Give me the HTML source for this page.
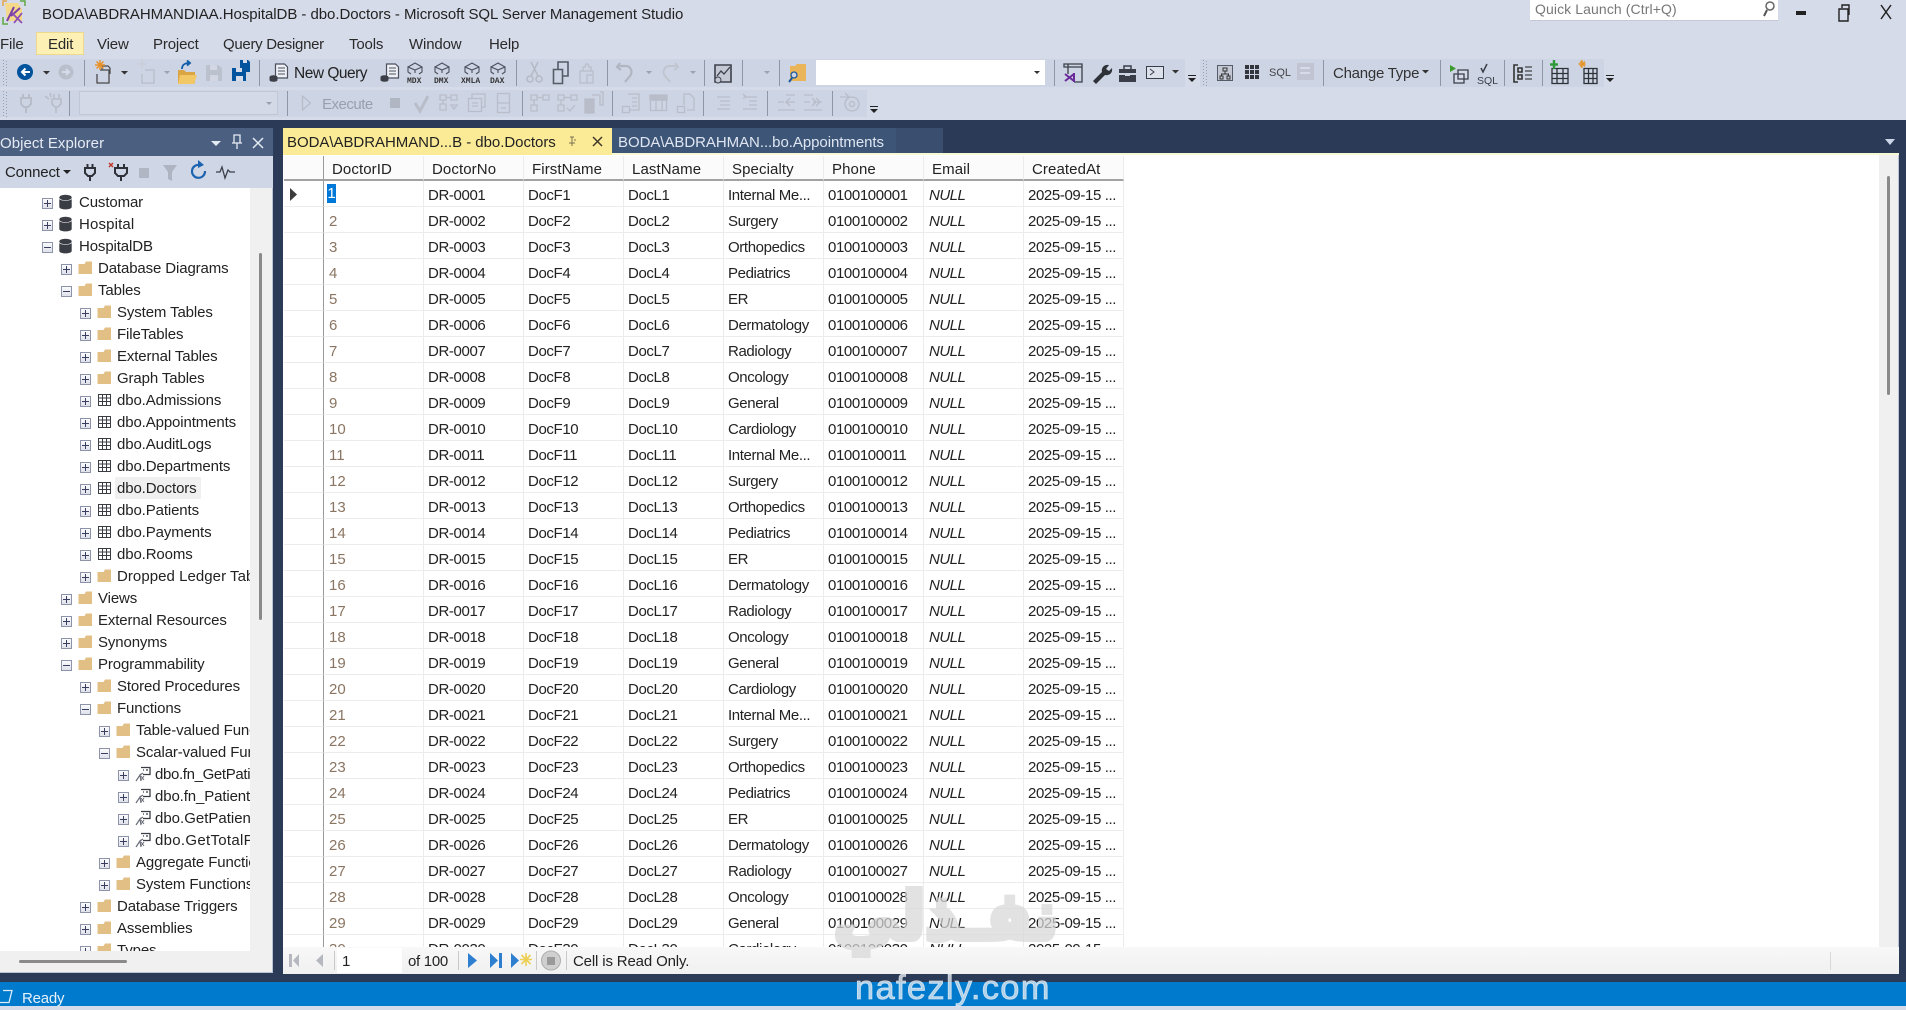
<!DOCTYPE html>
<html><head><meta charset="utf-8"><title>SSMS</title>
<style>
*{box-sizing:border-box}
html,body{margin:0;padding:0;width:1906px;height:1006px;overflow:hidden;background:#d6dbe9;font-family:"Liberation Sans",sans-serif;color:#1e1e1e}
.a{position:absolute;white-space:nowrap}
.band{position:absolute;background:#cdd4e4}
.menu{font-size:15px;line-height:22px;top:34px;letter-spacing:-.15px;color:#2a2a2a}
#tree{position:absolute;left:0;top:188px;width:250px;height:763px;background:#fff;overflow:hidden}
.r{position:absolute;left:0;width:250px;height:22px;font-size:15px;line-height:22px;letter-spacing:-.12px;color:#222;transform:translateY(1px)}
.r i{position:absolute;left:calc(var(--x)*1px);top:6px;width:11px;height:11px;border:1px solid #8d93a8;background:linear-gradient(#fbfbfd,#dfe1ea)}
.r i::before{content:"";position:absolute;left:1px;top:4px;width:7px;height:1px;background:#3a3f60}
.r i::after{content:"";position:absolute;left:4px;top:1px;width:1px;height:7px;background:#3a3f60}
.r i.m::after{display:none}
.r svg{position:absolute;left:calc(var(--x)*1px + 17px);top:2px;width:16px;height:16px}
.r span{position:absolute;left:calc(var(--x)*1px + 37.5px);top:0;white-space:nowrap}
.l1{--x:41.5}.l2{--x:60.5}.l3{--x:79.5}.l4{--x:98.5}.l5{--x:117.5}
#grid{position:absolute;left:283px;top:155px;width:1596px;height:792px;background:#fff;overflow:hidden}
table{position:absolute;left:1px;top:1px;border-collapse:separate;border-spacing:0;table-layout:fixed;width:840px;font-size:15px}
td{height:26px;padding:4px 0 0 4px;border-right:1px solid #ececec;border-bottom:1px solid #ececec;white-space:nowrap;overflow:hidden;letter-spacing:-.38px;color:#222;width:100px}
td:first-child{width:40px;border-right:1px solid #9a9a9a;padding:0}
td:nth-child(2){color:#8a7562;letter-spacing:0;padding-left:5px}
tr.h td{height:25px;background:#fbfbfb;border-bottom:2px solid #a2a2a2;padding-left:8px;letter-spacing:.1px}
tr.h td:first-child{padding:0}
td.n{font-style:italic;letter-spacing:-.5px;padding-left:5px}
</style></head><body>

<!-- toolbar bands -->
<div class="band" style="left:0;top:59px;width:1185px;height:28px"></div>
<div class="band" style="left:1200px;top:59px;width:404px;height:28px"></div>
<div class="band" style="left:0;top:90px;width:867px;height:27px"></div>

<!-- title bar -->
<div class="a" style="left:42px;top:4px;font-size:15px;line-height:22px;letter-spacing:-.05px;color:#222">BODA\ABDRAHMANDIAA.HospitalDB - dbo.Doctors - Microsoft SQL Server Management Studio</div>
<div class="a" style="left:1530px;top:0;width:248px;height:21px;background:#fff;border-bottom:1px solid #c4c9d6"></div>
<div class="a" style="left:1535px;top:-2px;font-size:14px;line-height:22px;letter-spacing:.1px;color:#777">Quick Launch (Ctrl+Q)</div>

<!-- menu -->
<div class="a" style="left:36px;top:32px;width:48px;height:23px;background:#fdf0b4;border:1px solid #ecd98e"></div>
<div class="a menu" style="left:0">File</div>
<div class="a menu" style="left:48px">Edit</div>
<div class="a menu" style="left:97px">View</div>
<div class="a menu" style="left:153px">Project</div>
<div class="a menu" style="left:223px;letter-spacing:-.3px">Query Designer</div>
<div class="a menu" style="left:349px">Tools</div>
<div class="a menu" style="left:409px">Window</div>
<div class="a menu" style="left:489px">Help</div>

<!-- toolbar text -->
<div class="a" style="left:294px;top:63px;font-size:15.5px;line-height:22px;letter-spacing:-.5px;color:#222">New Query</div>
<div class="a" style="left:322px;top:94px;font-size:15px;line-height:22px;color:#98a0ae;letter-spacing:-.5px">Execute</div>
<div class="a" style="left:1333px;top:63px;font-size:15px;line-height:22px;letter-spacing:-.25px;color:#333">Change Type</div>

<!-- white combos -->
<div class="a" style="left:816px;top:60px;width:229px;height:25px;background:#fff"></div>
<div class="a" style="left:79px;top:91px;width:199px;height:24px;background:#d3d9e7;border:1px solid #c1c7d5"></div>

<!-- toolbar icons -->
<svg class="a" style="left:0;top:0" width="1906" height="120" viewBox="0 0 1906 120" fill="none">
<defs>
<g id="cube" stroke="#4a4f5c" stroke-width="1.1"><path d="M1 5 8 1l7 4v5l-3 2M4 12 1 10V5l7 3 7-3M8 8v3"/></g>
<g id="qdoc"><path d="M6.500 2h9l3 3v11h-12z" fill="#eef0f6" stroke="#4a4f5c" stroke-width="1.200"/><path d="M9 6h7M9 9h7M9 12h7" stroke="#4a4f5c"/><ellipse cx="4.500" cy="15" rx="4" ry="1.800" fill="#3c3f48"/><path d="M.5 15v3c0 2.400 8 2.400 8 0v-3" fill="#3c3f48"/></g>
</defs>
<!-- grips -->
<g stroke="#98a0b2" stroke-dasharray="1 2"><path d="M3.500 60v27M6.500 61v26M3.500 91v26M6.500 92v25M1203.500 60v27M1206.500 61v26"/></g>
<!-- seps -->
<g stroke="#8f96a8"><path d="M84.500 60v26M259.500 60v26M516.500 60v26M607.500 60v26M704.500 60v26M742.500 60v26M779.500 60v26M1054.500 60v26M1323.500 60v26M1440.500 60v26M1504.500 60v26M1542.500 60v26M69.500 91v25M287.500 91v25M522.500 91v25M612.500 91v25M703.500 91v25M767.500 91v25M832.500 91v25"/></g>
<!-- carets -->
<g fill="#333"><path d="M43 71h7l-3.500 3.500zM121 71h7l-3.500 3.500zM1172 70h7l-3.500 3.500zM1422 70h7l-3.500 3.500zM1034 71h6l-3 3z"/></g>
<g fill="#9aa1b0"><path d="M164 71h6l-3 3zM646 71h6l-3 3zM690 71h6l-3 3zM764 71h6l-3 3zM266 102h6l-3 3z"/></g>
<!-- overflow -->
<g fill="#222"><path d="M1188 75h8v1h-8zM1188 78h8l-4 4zM870 106h8v1h-8zM870 109h8l-4 4zM1606 75h8v1h-8zM1606 78h8l-4 4z"/></g>
<!-- back / fwd -->
<circle cx="25" cy="72" r="8" fill="#00539c"/><path d="M30 72h-8m3.500-3.500L22 72l3.500 3.500" stroke="#fff" stroke-width="2"/>
<circle cx="66" cy="72" r="7.500" fill="#b9bfcb"/><path d="M62 72h7m-3-3 3 3-3 3" stroke="#d6dbe9" stroke-width="2"/>
<!-- new project -->
<path d="M100 70h9v13H97v-9" stroke="#4a4a4a" stroke-width="1.300"/><path d="M102 70v-4h6l2 2v6" stroke="#4a4a4a" stroke-width="1.200"/>
<path d="M100 60v10M95 65h10M96.500 61.500l7 7M103.500 61.500l-7 7" stroke="#e8912b" stroke-width="1.500"/>
<path d="M145 70h9v13h-12v-9" stroke="#b8bdc9" stroke-width="1.300"/><path d="M142 60v8M138 64h8" stroke="#c8ccd5" stroke-width="1.300"/>
<!-- open folder -->
<path d="M178 70h6l2 2h9v11h-17z" fill="#dca543"/><path d="M180 75h17l-3 9h-16z" fill="#f2c766"/><path d="M182 69c0-4 3-6 7-6m-2-2.500 3 2.500-3 2.500" stroke="#0f5da8" stroke-width="1.800"/>
<!-- save -->
<path d="M206 65h12l4 3v13h-16z" fill="#bcc2cd"/><path d="M210 65h7v5h-7zM210 75h8v6h-8z" fill="#d2d7e3"/>
<path d="M240 60h8l2 2v10h-10z" fill="#00539c"/><path d="M232 68h12l2 2v11h-14z" fill="#00539c"/><path d="M236 68h6v4h-6zM236 76h7v5h-7zM243 60h4v3h-4z" fill="#d6dbe9"/>
<!-- new query -->
<use href="#qdoc" x="269" y="62"/><use href="#qdoc" x="380" y="62"/>
<use href="#cube" x="407" y="62"/><use href="#cube" x="434" y="62"/><use href="#cube" x="464" y="62"/><use href="#cube" x="490" y="62"/>
<g font-family="Liberation Mono,monospace" font-size="8" font-weight="700" fill="#333"><text x="407" y="83">MDX</text><text x="434" y="83">DMX</text><text x="461" y="83">XMLA</text><text x="490" y="83">DAX</text></g>
<!-- cut copy paste -->
<g stroke="#b4b9c5" stroke-width="1.500"><circle cx="530" cy="79" r="3"/><circle cx="539" cy="79" r="3"/><path d="M531 76 538 62M538 76 531 62"/></g>
<path d="M553.500 69.500h9v14h-9zM558 69v-7h10v14h-5" stroke="#555b67" stroke-width="1.600"/>
<path d="M580 71h13v12h-13zM583 71v-4h2l1-3h2l1 3h2v4M587 83v-8h5" stroke="#b8bdc9" stroke-width="1.200"/>
<!-- undo redo -->
<path d="M618 66h8c5 0 7 6 4 10l-5 6m-5-19-3 4 4 3" stroke="#b0b6c2" stroke-width="2.200"/>
<path d="M676 66h-6c-6 0-8 6-5 10l5 6m5-19 3 4-4 3" stroke="#c0c5cf" stroke-width="2"/>
<!-- report -->
<path d="M715 65h16v17h-16z" fill="#c3c8d4" stroke="#3e424c" stroke-width="1.600"/><path d="M717 76l4-5 3 3 6-7" stroke="#3e424c" stroke-width="1.300"/><circle cx="718" cy="80" r="3" fill="#c3c8d4" stroke="#3e424c"/>
<!-- folder search -->
<path d="M790 66h5l2-2h9v17h-16z" fill="#e9b558"/><circle cx="794" cy="75" r="3" fill="#cdd4e4" stroke="#1c5a9e" stroke-width="1.300"/><path d="M792 78l-3 4" stroke="#1c5a9e" stroke-width="2"/>
<!-- vs window, wrench, toolbox, console -->
<path d="M1068 74v-10h14v18h-8M1064 64h18v3h-18z" stroke="#3a3e48" stroke-width="1.300"/><path d="M1065 74l9 7m0-7-9 7m9-8v9" stroke="#6a2a9a" stroke-width="2"/>
<path d="M1093 81l9-9c-1-4 2-8 7-7l-3 4 3 2 3-3c1 5-3 8-7 7l-9 9z" fill="#2e3138"/>
<path d="M1119 69h17v4h-17zM1119 75h17v7h-17z" fill="#3a3e48"/><path d="M1124 69v-3h7v3" stroke="#3a3e48" stroke-width="1.500"/><path d="M1125 73h5v3h-5z" fill="#cdd4e4"/>
<path d="M1146.500 66.500h17v12h-17z" fill="#dde1ec" stroke="#3a3e48"/><path d="M1150 69l4 3-4 3" stroke="#3a3e48"/>
<!-- diagram, grid, sql -->
<path d="M1217.500 65.500h15v15h-15z" fill="#c3c8d4" stroke="#555b67"/><path d="M1223 68h4v3h-4zM1220 76h3v3h-3zM1227 76h3v3h-3zM1225 71v3h-3.500v2m3.500-2h3.500v2" stroke="#333"/>
<g fill="#33363d"><path d="M1245 65h4v4h-4zM1250 65h4v4h-4zM1255 65h4v4h-4zM1245 70h4v4h-4zM1250 70h4v4h-4zM1255 70h4v4h-4zM1245 75h4v4h-4zM1250 75h4v4h-4zM1255 75h4v4h-4z"/></g>
<text x="1269" y="76" font-family="Liberation Sans,sans-serif" font-size="11" fill="#444">SQL</text>
<path d="M1297 63h17v17h-17z" fill="#c0c5d1"/><path d="M1300 68h10M1300 73h10" stroke="#d6dbe9" stroke-width="2"/>
<!-- run, check -->
<path d="M1450 65l6 3.500-6 3.500z" fill="#3c9a2f"/><path d="M1458 70h10v9h-10zM1454 74h10v9h-10z" fill="#d6dbe9" stroke="#3a3e48" stroke-width="1.300"/>
<path d="M1481 68l2 4 4-8" stroke="#3a3e48" stroke-width="1.500"/><text x="1477" y="84" font-family="Liberation Sans,sans-serif" font-size="10.500" fill="#3a3e48">SQL</text>
<!-- sql-list -->
<path d="M1518 65h-4v17h4M1522 68h-4v4h4zM1522 75h-4v4h4z" stroke="#333" stroke-width="1.600"/><path d="M1525 67h7M1525 71h7M1525 75h7M1525 79h7" stroke="#444" stroke-width="1.200"/>
<!-- add table -->
<path d="M1552 68.500h16v15h-16zM1552 73.500h16M1552 78.500h16M1557 69v14M1563 69v14" stroke="#2e3138" stroke-width="1.300"/><path d="M1554 60v9M1550 64.500h8" stroke="#2f9a3a" stroke-width="2.400"/>
<path d="M1584 68.500h13v15h-13zM1584 73.500h13M1584 78.500h13M1588.500 69v14M1593 69v14" stroke="#2e3138" stroke-width="1.300"/><path d="M1582 60v8M1578.500 64h7M1580 61.500l5 5M1585 61.500l-5 5" stroke="#e6952b" stroke-width="1.500"/>
<!-- toolbar2 disabled icons -->
<g stroke="#b8bdc9" stroke-width="1.300" fill="none">
<path d="M23 94v4M29 94v4M21 98h10v6l-3 3h-4l-3-3zM26 107v6" stroke-width="2"/>
<path d="M45 96l4 3M50 93l1 4M54 94v5M59 94v5M52 99h9v5l-3 3h-3l-3-3zM56 107v6" stroke-width="1.600"/>
<path d="M302.500 96l8 7-8 7z"/>
<path d="M440 95h6v5h-6zM451 95h6v5h-6zM446 97.500h5M443 100v4M440 104h6v6h-6zM451 105l3 4 3-4z"/>
<path d="M468.500 98.500h13v13h-13zM472 98v-4h13v13h-4M472 103h6M472 106h6"/>
<path d="M497.500 93.500h12v19h-12zM497 103h12M501 108h5"/>
<path d="M531 95h6v5h-6zM543 95h6v5h-6zM537 97.500h6M534 100v5M531 105h6v6h-6z"/>
<path d="M558 95h6v5h-6zM571 95h6v5h-6zM564 97.500h7M561 100v5M558 105h6v6h-6zM567 108l3 3 5-6"/>
<path d="M592 95h8v10h4M600 92h3v13"/><path d="M585 99h9v14h-9z" fill="#b8bdc9"/>
<path d="M628 94h11v16h-9M632 98h5M632 102h5M632 106h5M622.500 106.500h7v6h-7z"/>
<path d="M650.500 95.500h16v15h-16zM650 100h17M656 100v11M662 100v11" /><path d="M650 95h17v5h-17z" fill="#b8bdc9"/>
<path d="M684 105v-11h6l4 4v12h-7M677.500 106.500h7v6h-7z"/>
<path d="M717 97h13M720 101h10M720 105h10M717 109h13"/>
<path d="M746 97h11M749 101h8M749 105h8M743 109h14M743 94l3 3-3 1"/>
<path d="M786 95h9M778 102h6M787 102h8M790 98l-4 4 4 4M778 110h17"/><path d="M804 95h9M804 102h6M813 102h9M816 98l4 4-4 4M812 98l4 4-4 4M804 110h18"/>
<path d="M840 97h9M845 93l4 4-4 4"/><circle cx="852" cy="104" r="7"/><circle cx="852" cy="104" r="2.500"/>
</g>
<path d="M390 98h10v10h-10z" fill="#b1b6c3"/>
<path d="M415 103l5 8 8-15" stroke="#b8bdc9" stroke-width="3"/>
<!-- quick launch / window -->
<circle cx="1770" cy="6" r="4" stroke="#666" stroke-width="1.500"/><path d="M1767 10l-3 6" stroke="#555" stroke-width="2"/>
<path d="M1796 11h10v4h-10z" fill="#222"/>
<path d="M1839 9h9v12h-9z" fill="#d6dbe9" stroke="#222" stroke-width="1.400"/><path d="M1842 8V5h7v10" stroke="#222" stroke-width="1.400"/>
<path d="M1881 5l10 14m0-14-10 14" stroke="#222" stroke-width="1.500"/>
<!-- app icon -->
<path d="M5 3h13l4 6v12H7z" fill="#f5d98b"/><path d="M14 7l-7 14M20 8l-9 8" stroke="#7d3fa8" stroke-width="2"/><path d="M12 13l10 10M22 13l-8 10" stroke="#8a4fb8" stroke-width="1.800"/>
<path d="M3 17v7h5M20 1h5v5" stroke="#5faa46" stroke-width="1.500"/><path d="M7 1h-4v5" stroke="#e4a64a" stroke-width="1.500"/>
</svg>

<!-- dark well -->
<div class="a" style="left:0;top:120px;width:1906px;height:862px;background:#2b3a56"></div>

<!-- object explorer -->
<div class="a" style="left:0;top:128px;width:273px;height:28px;background:#4b5f80"></div>
<div class="a" style="left:0;top:133px;font-size:15px;line-height:22px;letter-spacing:.05px;color:#e6ebf3">Object Explorer</div>
<div class="a" style="left:0;top:156px;width:273px;height:32px;background:#cfd6e6"></div>
<div class="a" style="left:5px;top:162px;font-size:15px;line-height:22px;letter-spacing:-.15px;color:#222">Connect</div>
<svg class="a" style="left:0;top:128px" width="273" height="60" viewBox="0 128 273 60" fill="none">
<path d="M211 141h10l-5 5z" fill="#e6ebf3"/>
<path d="M234 135h6v8h-6zM232 143h10M237 143v6" stroke="#e6ebf3" stroke-width="1.300"/>
<path d="M253 138l10 10m0-10-10 10" stroke="#e6ebf3" stroke-width="1.500"/>
<path d="M63 170h8l-4 4z" fill="#222"/>
<path d="M87.500 164v4M92.500 164v4M85 168h10v5l-3 3h-4l-3-3zM90 176v5" stroke="#2e3138" stroke-width="2"/>
<path d="M109 163l4 4m0-4-4 4" stroke="#c0392b" stroke-width="1.500"/><path d="M118 164v4M124 164v4M115 168h12v5l-3 3h-6l-3-3zM121 176v5" stroke="#2e3138" stroke-width="2"/>
<path d="M139 168h10v10h-10z" fill="#b0b6c3"/>
<path d="M163 165h14l-5 7v9l-4-2v-7z" fill="#aeb4c1"/>
<path d="M205 171a6.500 6.500 0 1 1-5-6" stroke="#1c63b0" stroke-width="2.200"/><path d="M198 160l6 5-6 3z" fill="#1c63b0"/>
<path d="M216 172h4l2-5 3 11 3-8 2 2h5" stroke="#3c3f48" stroke-width="1.300"/>
</svg>

<!-- tree -->
<svg width="0" height="0" style="position:absolute">
<defs>
<symbol id="db" viewBox="0 0 16 16"><ellipse cx="6.500" cy="3.500" rx="6.200" ry="2.800" fill="#3b3d44"/><path d="M.3 5v8c0 3.200 12.400 3.200 12.400 0V5c-1.500 2.300-11 2.300-12.400 0z" fill="#3b3d44"/></symbol>
<symbol id="f" viewBox="0 0 16 16"><path d="M.5 4h6l1.500-2.500h6V14H.5z" fill="#e2bf84"/></symbol>
<symbol id="t" viewBox="0 0 16 16"><path d="M1.500 2.500h12v11h-12zM1.500 6h12M1.500 9.500h12M5.500 2.500v11M9.500 2.500v11" fill="none" stroke="#3a3c44" stroke-width="1"/></symbol>
<symbol id="fn" viewBox="0 0 16 16"><path d="M6 1.500h9v7H8M8 4h1M11 4h2" fill="none" stroke="#3a3c44" stroke-width="1.300"/><path d="M1 15l4-6 1 6M5 9l3-2" fill="none" stroke="#6a6d78" stroke-width="1.200"/><path d="M6 10l3 4m0-4-3 4" stroke="#6a6d78" stroke-width="1"/></symbol>
</defs>
</svg>
<div id="tree">
<div class="r l1" style="top:3px"><i></i><svg><use href="#db"/></svg><span>Customar</span></div>
<div class="r l1" style="top:25px"><i></i><svg><use href="#db"/></svg><span style="letter-spacing:.15px">Hospital</span></div>
<div class="r l1" style="top:47px"><i class="m"></i><svg><use href="#db"/></svg><span>HospitalDB</span></div>
<div class="r l2" style="top:69px"><i></i><svg><use href="#f"/></svg><span>Database Diagrams</span></div>
<div class="r l2" style="top:91px"><i class="m"></i><svg><use href="#f"/></svg><span>Tables</span></div>
<div class="r l3" style="top:113px"><i></i><svg><use href="#f"/></svg><span>System Tables</span></div>
<div class="r l3" style="top:135px"><i></i><svg><use href="#f"/></svg><span>FileTables</span></div>
<div class="r l3" style="top:157px"><i></i><svg><use href="#f"/></svg><span>External Tables</span></div>
<div class="r l3" style="top:179px"><i></i><svg><use href="#f"/></svg><span>Graph Tables</span></div>
<div class="r l3" style="top:201px"><i></i><svg><use href="#t"/></svg><span>dbo.Admissions</span></div>
<div class="r l3" style="top:223px"><i></i><svg><use href="#t"/></svg><span>dbo.Appointments</span></div>
<div class="r l3" style="top:245px"><i></i><svg><use href="#t"/></svg><span>dbo.AuditLogs</span></div>
<div class="r l3" style="top:267px"><i></i><svg><use href="#t"/></svg><span>dbo.Departments</span></div>
<div class="a" style="left:115px;top:289px;width:86px;height:22px;background:#f0f0f0"></div>
<div class="r l3" style="top:289px"><i></i><svg><use href="#t"/></svg><span>dbo.Doctors</span></div>
<div class="r l3" style="top:311px"><i></i><svg><use href="#t"/></svg><span>dbo.Patients</span></div>
<div class="r l3" style="top:333px"><i></i><svg><use href="#t"/></svg><span>dbo.Payments</span></div>
<div class="r l3" style="top:355px"><i></i><svg><use href="#t"/></svg><span>dbo.Rooms</span></div>
<div class="r l3" style="top:377px"><i></i><svg><use href="#f"/></svg><span style="letter-spacing:.05px">Dropped Ledger Tables</span></div>
<div class="r l2" style="top:399px"><i></i><svg><use href="#f"/></svg><span>Views</span></div>
<div class="r l2" style="top:421px"><i></i><svg><use href="#f"/></svg><span>External Resources</span></div>
<div class="r l2" style="top:443px"><i></i><svg><use href="#f"/></svg><span>Synonyms</span></div>
<div class="r l2" style="top:465px"><i class="m"></i><svg><use href="#f"/></svg><span>Programmability</span></div>
<div class="r l3" style="top:487px"><i></i><svg><use href="#f"/></svg><span>Stored Procedures</span></div>
<div class="r l3" style="top:509px"><i class="m"></i><svg><use href="#f"/></svg><span>Functions</span></div>
<div class="r l4" style="top:531px"><i></i><svg><use href="#f"/></svg><span>Table-valued Functions</span></div>
<div class="r l4" style="top:553px"><i class="m"></i><svg><use href="#f"/></svg><span>Scalar-valued Functions</span></div>
<div class="r l5" style="top:575px"><i></i><svg><use href="#fn"/></svg><span style="letter-spacing:-.35px">dbo.fn_GetPatient</span></div>
<div class="r l5" style="top:597px"><i></i><svg><use href="#fn"/></svg><span>dbo.fn_PatientAge</span></div>
<div class="r l5" style="top:619px"><i></i><svg><use href="#fn"/></svg><span style="letter-spacing:0">dbo.GetPatientAge</span></div>
<div class="r l5" style="top:641px"><i></i><svg><use href="#fn"/></svg><span style="letter-spacing:.3px">dbo.GetTotalPaid</span></div>
<div class="r l4" style="top:663px"><i></i><svg><use href="#f"/></svg><span>Aggregate Functions</span></div>
<div class="r l4" style="top:685px"><i></i><svg><use href="#f"/></svg><span>System Functions</span></div>
<div class="r l3" style="top:707px"><i></i><svg><use href="#f"/></svg><span>Database Triggers</span></div>
<div class="r l3" style="top:729px"><i></i><svg><use href="#f"/></svg><span>Assemblies</span></div>
<div class="r l3" style="top:751px"><i></i><svg><use href="#f"/></svg><span>Types</span></div>
</div>
<div class="a" style="left:250px;top:188px;width:23px;height:763px;background:#f0f0f0;border-right:1px solid #b9c3d6"></div>
<div class="a" style="left:0;top:951px;width:273px;height:22px;background:#f0f0f0;border-right:1px solid #b9c3d6;border-bottom:1px solid #b9c3d6"></div>
<div class="a" style="left:259px;top:253px;width:3px;height:367px;background:#8a8a8a;border-radius:2px"></div>
<div class="a" style="left:19px;top:960px;width:108px;height:3px;background:#8a8a8a;border-radius:2px"></div>

<!-- tabs -->
<div class="a" style="left:283px;top:153px;width:1616px;height:2px;background:#f6f9d4"></div>
<div class="a" style="left:283px;top:128px;width:329px;height:27px;background:#fbeb96"></div>
<div class="a" style="left:287px;top:132px;font-size:15px;line-height:22px;letter-spacing:-.04px;color:#222">BODA\ABDRAHMAND...B - dbo.Doctors</div>
<svg class="a" style="left:565px;top:132px" width="42" height="20" viewBox="0 0 42 20" fill="none"><path d="M7 5v6M5 5h4M4 11h6M7 11v3M9 8h2" stroke="#7a7050" stroke-width="1"/><path d="M28 5l9 9m0-9-9 9" stroke="#40392a" stroke-width="1.500"/></svg>
<div class="a" style="left:612px;top:128px;width:284px;height:25px;background:#3d5577"></div>
<div class="a" style="left:896px;top:128px;width:47px;height:25px;background:#3a4f70"></div>
<div class="a" style="left:618px;top:132px;font-size:15px;line-height:22px;letter-spacing:-.05px;color:#dfe6f2">BODA\ABDRAHMAN...bo.Appointments</div>
<svg class="a" style="left:1884px;top:138px" width="12" height="8"><path d="M1 1h10L6 7z" fill="#cdd6e8"/></svg>

<!-- grid -->
<div id="grid">
<table>
<tr class="h"><td></td><td style="color:#222;padding-left:8px">DoctorID</td><td>DoctorNo</td><td>FirstName</td><td>LastName</td><td>Specialty</td><td>Phone</td><td>Email</td><td>CreatedAt</td></tr>
<tr><td></td><td>&nbsp;</td><td>DR-0001</td><td>DocF1</td><td>DocL1</td><td>Internal Me...</td><td>0100100001</td><td class="n">NULL</td><td>2025-09-15 ...</td></tr>
<tr><td></td><td>2</td><td>DR-0002</td><td>DocF2</td><td>DocL2</td><td>Surgery</td><td>0100100002</td><td class="n">NULL</td><td>2025-09-15 ...</td></tr>
<tr><td></td><td>3</td><td>DR-0003</td><td>DocF3</td><td>DocL3</td><td>Orthopedics</td><td>0100100003</td><td class="n">NULL</td><td>2025-09-15 ...</td></tr>
<tr><td></td><td>4</td><td>DR-0004</td><td>DocF4</td><td>DocL4</td><td>Pediatrics</td><td>0100100004</td><td class="n">NULL</td><td>2025-09-15 ...</td></tr>
<tr><td></td><td>5</td><td>DR-0005</td><td>DocF5</td><td>DocL5</td><td>ER</td><td>0100100005</td><td class="n">NULL</td><td>2025-09-15 ...</td></tr>
<tr><td></td><td>6</td><td>DR-0006</td><td>DocF6</td><td>DocL6</td><td>Dermatology</td><td>0100100006</td><td class="n">NULL</td><td>2025-09-15 ...</td></tr>
<tr><td></td><td>7</td><td>DR-0007</td><td>DocF7</td><td>DocL7</td><td>Radiology</td><td>0100100007</td><td class="n">NULL</td><td>2025-09-15 ...</td></tr>
<tr><td></td><td>8</td><td>DR-0008</td><td>DocF8</td><td>DocL8</td><td>Oncology</td><td>0100100008</td><td class="n">NULL</td><td>2025-09-15 ...</td></tr>
<tr><td></td><td>9</td><td>DR-0009</td><td>DocF9</td><td>DocL9</td><td>General</td><td>0100100009</td><td class="n">NULL</td><td>2025-09-15 ...</td></tr>
<tr><td></td><td>10</td><td>DR-0010</td><td>DocF10</td><td>DocL10</td><td>Cardiology</td><td>0100100010</td><td class="n">NULL</td><td>2025-09-15 ...</td></tr>
<tr><td></td><td>11</td><td>DR-0011</td><td>DocF11</td><td>DocL11</td><td>Internal Me...</td><td>0100100011</td><td class="n">NULL</td><td>2025-09-15 ...</td></tr>
<tr><td></td><td>12</td><td>DR-0012</td><td>DocF12</td><td>DocL12</td><td>Surgery</td><td>0100100012</td><td class="n">NULL</td><td>2025-09-15 ...</td></tr>
<tr><td></td><td>13</td><td>DR-0013</td><td>DocF13</td><td>DocL13</td><td>Orthopedics</td><td>0100100013</td><td class="n">NULL</td><td>2025-09-15 ...</td></tr>
<tr><td></td><td>14</td><td>DR-0014</td><td>DocF14</td><td>DocL14</td><td>Pediatrics</td><td>0100100014</td><td class="n">NULL</td><td>2025-09-15 ...</td></tr>
<tr><td></td><td>15</td><td>DR-0015</td><td>DocF15</td><td>DocL15</td><td>ER</td><td>0100100015</td><td class="n">NULL</td><td>2025-09-15 ...</td></tr>
<tr><td></td><td>16</td><td>DR-0016</td><td>DocF16</td><td>DocL16</td><td>Dermatology</td><td>0100100016</td><td class="n">NULL</td><td>2025-09-15 ...</td></tr>
<tr><td></td><td>17</td><td>DR-0017</td><td>DocF17</td><td>DocL17</td><td>Radiology</td><td>0100100017</td><td class="n">NULL</td><td>2025-09-15 ...</td></tr>
<tr><td></td><td>18</td><td>DR-0018</td><td>DocF18</td><td>DocL18</td><td>Oncology</td><td>0100100018</td><td class="n">NULL</td><td>2025-09-15 ...</td></tr>
<tr><td></td><td>19</td><td>DR-0019</td><td>DocF19</td><td>DocL19</td><td>General</td><td>0100100019</td><td class="n">NULL</td><td>2025-09-15 ...</td></tr>
<tr><td></td><td>20</td><td>DR-0020</td><td>DocF20</td><td>DocL20</td><td>Cardiology</td><td>0100100020</td><td class="n">NULL</td><td>2025-09-15 ...</td></tr>
<tr><td></td><td>21</td><td>DR-0021</td><td>DocF21</td><td>DocL21</td><td>Internal Me...</td><td>0100100021</td><td class="n">NULL</td><td>2025-09-15 ...</td></tr>
<tr><td></td><td>22</td><td>DR-0022</td><td>DocF22</td><td>DocL22</td><td>Surgery</td><td>0100100022</td><td class="n">NULL</td><td>2025-09-15 ...</td></tr>
<tr><td></td><td>23</td><td>DR-0023</td><td>DocF23</td><td>DocL23</td><td>Orthopedics</td><td>0100100023</td><td class="n">NULL</td><td>2025-09-15 ...</td></tr>
<tr><td></td><td>24</td><td>DR-0024</td><td>DocF24</td><td>DocL24</td><td>Pediatrics</td><td>0100100024</td><td class="n">NULL</td><td>2025-09-15 ...</td></tr>
<tr><td></td><td>25</td><td>DR-0025</td><td>DocF25</td><td>DocL25</td><td>ER</td><td>0100100025</td><td class="n">NULL</td><td>2025-09-15 ...</td></tr>
<tr><td></td><td>26</td><td>DR-0026</td><td>DocF26</td><td>DocL26</td><td>Dermatology</td><td>0100100026</td><td class="n">NULL</td><td>2025-09-15 ...</td></tr>
<tr><td></td><td>27</td><td>DR-0027</td><td>DocF27</td><td>DocL27</td><td>Radiology</td><td>0100100027</td><td class="n">NULL</td><td>2025-09-15 ...</td></tr>
<tr><td></td><td>28</td><td>DR-0028</td><td>DocF28</td><td>DocL28</td><td>Oncology</td><td>0100100028</td><td class="n">NULL</td><td>2025-09-15 ...</td></tr>
<tr><td></td><td>29</td><td>DR-0029</td><td>DocF29</td><td>DocL29</td><td>General</td><td>0100100029</td><td class="n">NULL</td><td>2025-09-15 ...</td></tr>
<tr><td></td><td>30</td><td>DR-0030</td><td>DocF30</td><td>DocL30</td><td>Cardiology</td><td>0100100030</td><td class="n">NULL</td><td>2025-09-15 ...</td></tr>
</table>
<div class="a" style="left:44px;top:29px;width:9px;height:19px;background:#0078d7;color:#fff;font-size:15px;line-height:20px;text-align:center">1</div>
<svg class="a" style="left:7px;top:33px" width="8" height="14"><path d="M0 0l7 6.500L0 13z" fill="#3c3c3c"/></svg>
</div>
<div class="a" style="left:1879px;top:155px;width:20px;height:819px;background:#f0f0f0;border-right:1px solid #b9c3d6"></div>
<div class="a" style="left:1887px;top:176px;width:3px;height:219px;background:#8a8a8a;border-radius:2px"></div>

<!-- nav bar -->
<div class="a" style="left:283px;top:947px;width:1616px;height:27px;background:linear-gradient(#f8f8f8,#f0f0f0)"></div>
<div class="a" style="left:1830px;top:952px;width:1px;height:18px;background:#d8d8d8"></div>
<div class="a" style="left:337px;top:948px;width:65px;height:25px;background:#fff"></div>
<div class="a" style="left:342px;top:951px;font-size:15px;line-height:22px;color:#222">1</div>
<div class="a" style="left:408px;top:951px;font-size:15px;line-height:22px;letter-spacing:-.3px;color:#222">of 100</div>
<div class="a" style="left:573px;top:951px;font-size:15px;line-height:22px;letter-spacing:-.15px;color:#222">Cell is Read Only.</div>
<svg class="a" style="left:283px;top:947px" width="300" height="27" viewBox="283 947 300 27" fill="none">
<path d="M289 954h3v13h-3zM299 954l-6 6.500 6 6.500z" fill="#b5b8bf"/>
<path d="M323 954l-7 6.500 7 6.500z" fill="#b5b8bf"/>
<path d="M334.500 951v19M458.500 951v19M536.500 951v19M566.500 951v19" stroke="#c9c9c9"/>
<path d="M468 953l9 7.500-9 7.500z" fill="#2f7fd1"/>
<path d="M490 953l8 7.500-8 7.500zM499 953h3v15h-3z" fill="#2f7fd1"/>
<path d="M511 953l8 7.500-8 7.500z" fill="#2f7fd1"/>
<path d="M526 953v13M520 959.500h12M521.500 955l9 9M530.500 955l-9 9" stroke="#eccf54" stroke-width="1.600"/>
<circle cx="551" cy="960.500" r="9.500" fill="#cfcfcf" stroke="#aeaeae"/><path d="M547 957h8v8h-8z" fill="#9a9a9a"/>
</svg>

<!-- status -->
<div class="a" style="left:0;top:982px;width:1906px;height:24px;background:#007acc"></div>
<svg class="a" style="left:0;top:989px" width="14" height="16"><path d="M3 1.500h9l-3 12H0" fill="none" stroke="#dcebf7" stroke-width="1.300"/></svg>
<div class="a" style="left:22px;top:988px;font-size:15px;line-height:22px;letter-spacing:-.2px;color:#e6f1fa">Ready</div>

<!-- watermark -->
<div class="a" style="left:830px;top:862px;width:232px;text-align:right;font-family:'DejaVu Sans',sans-serif;font-weight:700;font-size:66px;line-height:110px;direction:rtl;color:#d8d8d8;-webkit-text-stroke:6px #d8d8d8;opacity:.72;text-align:center">نفـذلي</div>
<div class="a" style="left:855px;top:970px;font-size:34.500px;line-height:36px;letter-spacing:1.300px;color:rgba(235,240,245,.75);-webkit-text-stroke:.8px rgba(235,240,245,.75)">nafezly.com</div>

</body></html>
